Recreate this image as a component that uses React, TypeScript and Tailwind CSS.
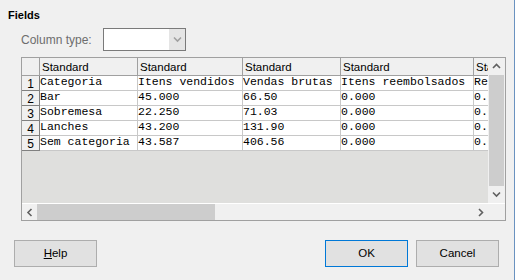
const colWidths = [98, 105, 98, 133, 98]

const rows = [
  ['Categoria', 'Itens vendidos', 'Vendas brutas', 'Itens reembolsados', 'Reembolsos'],
  ['Bar', '45.000', '66.50', '0.000', '0.00'],
  ['Sobremesa', '22.250', '71.03', '0.000', '0.00'],
  ['Lanches', '43.200', '131.90', '0.000', '0.00'],
  ['Sem categoria', '43.587', '406.56', '0.000', '0.00'],
]

function Chevron({ dir, color = '#606060' }: { dir: 'up' | 'down' | 'left' | 'right'; color?: string }) {
  const d = {
    up: 'M1 5 L4.5 1.5 L8 5',
    down: 'M1 1.5 L4.5 5 L8 1.5',
    left: 'M5.5 1 L2 4.5 L5.5 8',
    right: 'M2 1 L5.5 4.5 L2 8',
  }[dir]
  const vertical = dir === 'up' || dir === 'down'
  return (
    <svg width={vertical ? 9 : 7} height={vertical ? 7 : 9} viewBox={vertical ? '0 0 9 7' : '0 0 7 9'}>
      <path d={d} fill="none" stroke={color} strokeWidth="1.6" />
    </svg>
  )
}

function Button({ children, primary }: { children: React.ReactNode; primary?: boolean }) {
  return (
    <button
      className={
        'w-[83px] h-[27px] bg-[#e1e1e1] text-[11.5px] text-black border ' +
        (primary ? 'border-[#0078d7]' : 'border-[#adadad]')
      }
    >
      {children}
    </button>
  )
}

export default function App() {
  return (
    <div
      className="w-[515px] h-[280px] bg-[#f0f0f0] border-r border-[#6a92c0] text-black overflow-hidden"
      style={{ fontFamily: '"Liberation Sans", Arial, sans-serif' }}
    >
      <div className="pt-[8px] pl-2 text-[11px] font-bold leading-[14px]">Fields</div>

      <div className="mt-[6px] ml-[21px] flex items-center h-[23px]">
        <span className="w-[82px] text-[12px] text-[#6d6d6d]">Column type:</span>
        <div className="w-[83px] h-[23px] border border-[#7a7a7a] bg-white flex justify-end">
          <div className="w-[16px] h-full bg-[#e5e5e5] flex items-center justify-center">
            <Chevron dir="down" color="#a0a0a0" />
          </div>
        </div>
      </div>

      <div className="mt-[6px] ml-[21px] w-[485px] h-[164px] border border-[#a0a0a0] flex flex-col">
        <div className="flex h-[145px]">
          <div className="w-[466px] h-full bg-[#dfdfdd] overflow-hidden">
            <div className="flex h-[18px] border-b border-[#a0a0a0] bg-[#f0f0f0] w-max">
              <div className="w-[18px] h-full border-r border-[#a0a0a0]" />
              {colWidths.map((w, i) => (
                <div
                  key={i}
                  className="h-full border-r border-[#a0a0a0] pl-[2px] pt-px text-[11.5px] leading-[16px] overflow-hidden whitespace-nowrap"
                  style={{ width: w }}
                >
                  Standard
                </div>
              ))}
            </div>
            {rows.map((row, r) => (
              <div key={r} className="flex h-[15px] w-max">
                <div className="w-[18px] h-full bg-[#f0f0f0] border-r border-b border-[#808080] text-center text-[12px] leading-[14px] pt-px">
                  {r + 1}
                </div>
                {row.map((cell, c) => (
                  <div
                    key={c}
                    className="h-full bg-white border-r border-b border-[#c8c8c8] overflow-hidden whitespace-nowrap text-[11.5px] leading-[12px]"
                    style={{ width: colWidths[c], fontFamily: '"Liberation Mono", "Courier New", monospace' }}
                  >
                    {cell}
                  </div>
                ))}
              </div>
            ))}
          </div>
          <div className="w-[17px] h-full flex flex-col bg-[#f0f0f0]">
            <div className="h-[17px] flex items-center justify-center">
              <Chevron dir="up" />
            </div>
            <div className="h-[111px] mx-px bg-[#cdcdcd]" />
            <div className="flex-1 flex items-center justify-center">
              <Chevron dir="down" />
            </div>
          </div>
        </div>
        <div className="flex h-[17px] border-t border-white">
          <div className="w-[466px] h-full flex bg-[#f0f0f0]">
            <div className="w-[15px] flex items-center justify-center">
              <Chevron dir="left" />
            </div>
            <div className="w-[178px] h-full bg-[#cdcdcd]" />
            <div className="flex-1" />
            <div className="w-[16px] flex items-center justify-center">
              <Chevron dir="right" />
            </div>
          </div>
          <div className="w-[17px] h-full bg-[#f0f0f0]" />
        </div>
      </div>

      <div className="mt-[19px] flex items-center pl-[14px] pr-[15px]">
        <Button>
          <span className="underline">H</span>elp
        </Button>
        <div className="flex-1" />
        <Button primary>OK</Button>
        <div className="w-[8px]" />
        <Button>Cancel</Button>
      </div>
    </div>
  )
}
